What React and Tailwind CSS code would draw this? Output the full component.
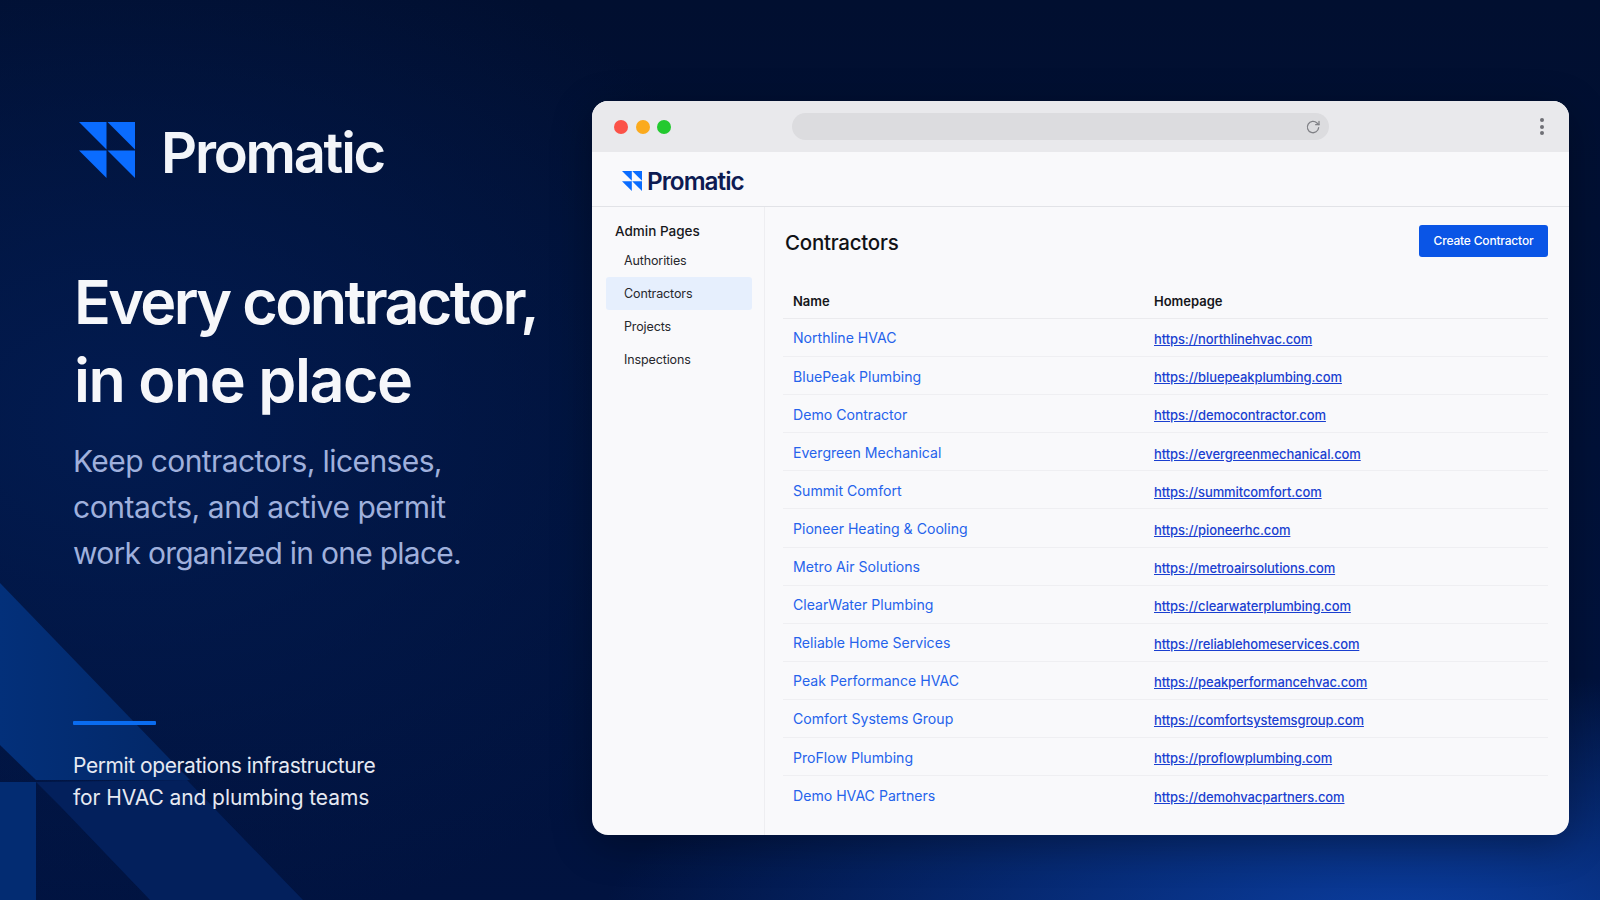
const contractors = [
  ["Northline HVAC", "https://northlinehvac.com"],
  ["BluePeak Plumbing", "https://bluepeakplumbing.com"],
  ["Demo Contractor", "https://democontractor.com"],
  ["Evergreen Mechanical", "https://evergreenmechanical.com"],
  ["Summit Comfort", "https://summitcomfort.com"],
  ["Pioneer Heating & Cooling", "https://pioneerhc.com"],
  ["Metro Air Solutions", "https://metroairsolutions.com"],
  ["ClearWater Plumbing", "https://clearwaterplumbing.com"],
  ["Reliable Home Services", "https://reliablehomeservices.com"],
  ["Peak Performance HVAC", "https://peakperformancehvac.com"],
  ["Comfort Systems Group", "https://comfortsystemsgroup.com"],
  ["ProFlow Plumbing", "https://proflowplumbing.com"],
  ["Demo HVAC Partners", "https://demohvacpartners.com"],
];

const nav = ["Authorities", "Contractors", "Projects", "Inspections"];

function Logo({ className }) {
  return (
    <svg viewBox="0 0 56 56" className={className} fill="#0a6cff">
      <polygon points="0,0 27.5,0 27.5,27.5" />
      <polygon points="28.5,0 56,0 56,27.5" />
      <polygon points="0,28.5 27.5,28.5 27.5,56" />
      <polygon points="28.5,28.5 56,28.5 56,56" />
    </svg>
  );
}

export default function App() {
  return (
    <div
      className="relative flex h-[900px] w-full overflow-hidden bg-[#01123a] bg-[radial-gradient(ellipse_800px_260px_at_1400px_930px,#0b3fa3_0%,rgba(11,63,163,0)_100%),radial-gradient(ellipse_700px_520px_at_120px_420px,#021b50_0%,rgba(2,27,80,0)_100%),linear-gradient(180deg,#010f30_0%,#011340_100%)] pl-[73px] pr-[31px] font-['Inter',sans-serif]"
    >
      <svg className="absolute left-0 top-0 h-[900px] w-[500px]" viewBox="0 0 500 900">
        <defs>
          <linearGradient id="band" x1="0" y1="0" x2="1" y2="0">
            <stop offset="0" stopColor="#03307a" />
            <stop offset="1" stopColor="#032766" />
          </linearGradient>
        </defs>
        <polygon points="0,583 190,780 36,780 0,745" fill="url(#band)" />
        <polygon points="0,782 36,782 36,900 0,900" fill="#032c72" />
        <polygon points="187,780 303,900 150,900 60,806 36,782" fill="#03205c" />
      </svg>

      <div className="relative flex w-[519px] flex-none flex-col">
        <div className="ml-[6px] mt-[122px] flex h-[56px] items-center gap-[26px]">
          <Logo className="h-[56px] w-[56px]" />
          <span className="mt-[6px] text-[56px] font-semibold leading-[56px] tracking-[-0.04em] text-[#f3f5f9]">Promatic</span>
        </div>
        <h1 className="ml-[1px] mt-[85px] text-[61px] font-semibold leading-[78px] text-[#f6f7fa]">
          <span className="tracking-[-0.043em]">Every contractor,</span>
          <br />
          <span className="tracking-[-0.024em]">in one place</span>
        </h1>
        <p className="mt-[19px] text-[30px] font-normal leading-[46px] text-[#9fb0dc]">
          <span className="tracking-[-0.02em]">Keep contractors, licenses,</span>
          <br />
          <span className="tracking-[-0.015em]">contacts, and active permit</span>
          <br />
          <span className="tracking-[-0.025em]">work organized in one place.</span>
        </p>
        <div className="mt-[145px] h-[4px] w-[83px] rounded-[1px] bg-[#0a6cf0]" />
        <p className="mt-[25px] text-[21px] leading-[32px] text-[#e6e9f2]">
          <span className="tracking-[-0.02em]">Permit operations infrastructure</span>
          <br />
          <span className="tracking-[-0.004em]">for HVAC and plumbing teams</span>
        </p>
      </div>

      <div className="relative ml-auto mt-[101px] flex h-[734px] w-[977px] flex-none flex-col overflow-hidden rounded-[16px] bg-[#f9f9fb] shadow-[0_10px_40px_rgba(0,0,0,0.3)]">
        <div className="relative flex h-[51px] flex-none items-center bg-[#e9e9ec] pl-[22px] pr-[25px]">
          <div className="flex gap-[7.5px]">
            <span className="h-[14px] w-[14px] rounded-full bg-[#fb5248]" />
            <span className="h-[14px] w-[14px] rounded-full bg-[#fbaa1d]" />
            <span className="h-[14px] w-[14px] rounded-full bg-[#23c92f]" />
          </div>
          <div className="ml-[121px] flex h-[27px] w-[537px] items-center justify-end rounded-full bg-[#dcdcdf] pr-[8px]">
            <svg viewBox="0 0 24 24" className="h-[16px] w-[16px]" fill="none" stroke="#808186" strokeWidth="1.9" strokeLinecap="round" strokeLinejoin="round">
              <path d="M20.5 13a8.5 8.5 0 1 1-2.5-7L21 8.5" />
              <path d="M21 3.5v5h-5" />
            </svg>
          </div>
          <div className="ml-auto flex flex-col gap-[2.5px]">
            <span className="h-[4px] w-[4px] rounded-full bg-[#6f7076]" />
            <span className="h-[4px] w-[4px] rounded-full bg-[#6f7076]" />
            <span className="h-[4px] w-[4px] rounded-full bg-[#6f7076]" />
          </div>
        </div>

        <div className="flex h-[55px] flex-none items-center gap-[5px] border-b border-[#e2e3e7] pl-[30px] pt-[3px]">
          <Logo className="h-[20px] w-[20px]" />
          <span className="mt-[1px] text-[24.3px] font-semibold leading-none tracking-[-0.04em] text-[#0d1b52]">Promatic</span>
        </div>

        <div className="flex min-h-0 flex-1">
          <aside className="w-[173px] flex-none border-r border-[#eeeef1] pl-[14px] pr-[12px]">
            <div className="ml-[9px] mt-[14px] text-[13.5px] font-medium leading-[20px] text-[#17181c]">Admin Pages</div>
            <ul className="mt-[3px] flex flex-col">
              {nav.map((item) => (
                <li
                  key={item}
                  className={`flex h-[33px] items-center rounded-[3px] pl-[18px] pt-[2px] text-[12.5px] tracking-[-0.01em] text-[#26272c] ${item === "Contractors" ? "bg-[#e6effd]" : ""}`}
                >
                  {item}
                </li>
              ))}
            </ul>
          </aside>

          <main className="min-w-0 flex-1 pl-[18px] pr-[21px]">
            <div className="mt-[17px] flex h-[33px] items-center justify-between">
              <h2 className="ml-[2px] mt-[6px] text-[20.5px] font-medium tracking-[-0.012em] text-[#111216]">Contractors</h2>
              <button className="h-[32px] w-[129px] rounded-[3px] bg-[#0a55e6] text-[12px] font-medium tracking-[-0.015em] text-white">Create Contractor</button>
            </div>
            <div className="mt-[28px]">
              <div className="grid h-[34px] grid-cols-[361px_1fr] items-center border-b border-[#ebebee] pl-[10px] text-[13px] font-semibold text-[#15161a]">
                <span>Name</span>
                <span>Homepage</span>
              </div>
              {contractors.map(([name, url]) => (
                <div key={name} className="grid h-[38.1px] grid-cols-[361px_1fr] items-center border-b border-[#efeff2] pl-[10px] pt-[1px] text-[14.1px] last:border-b-0">
                  <a className="text-[#2563eb]">{name}</a>
                  <a className="mt-[4px] text-[13px] font-medium tracking-[-0.008em] text-[#1a3fd0] underline">{url}</a>
                </div>
              ))}
            </div>
          </main>
        </div>
      </div>
    </div>
  );
}
